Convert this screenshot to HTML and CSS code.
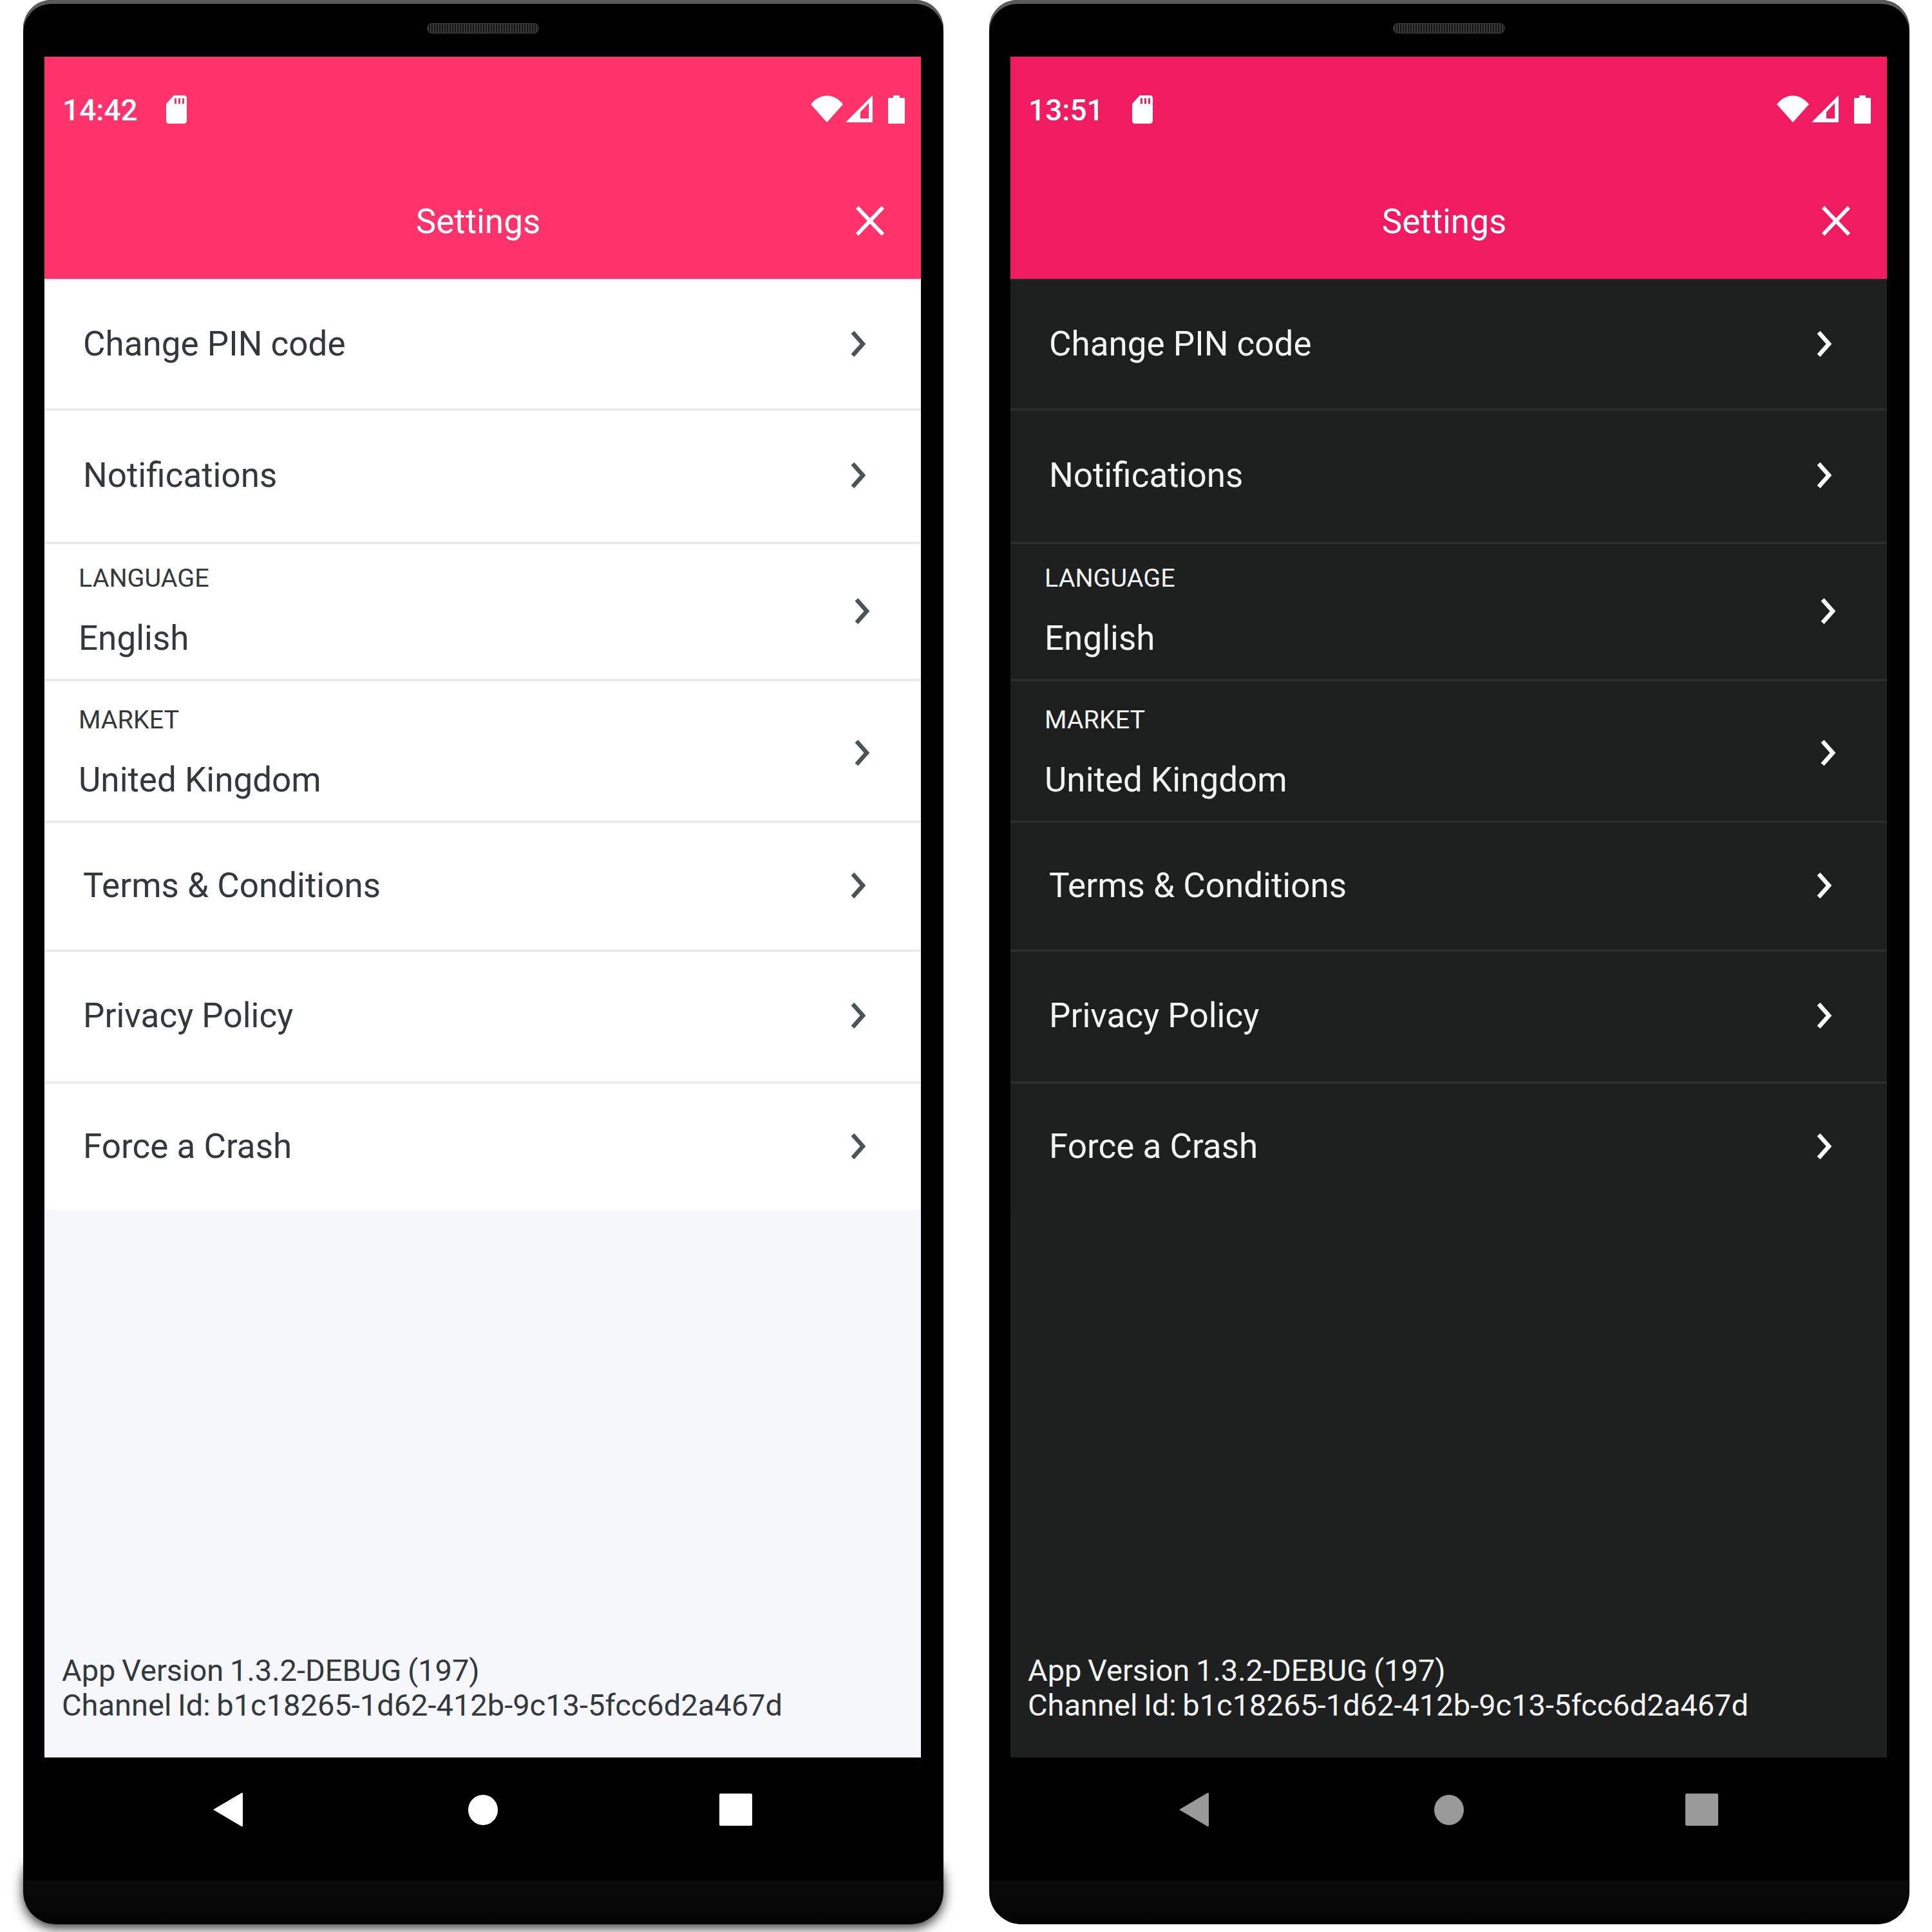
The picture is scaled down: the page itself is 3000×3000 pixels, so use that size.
FILE: index.html
```html
<!DOCTYPE html>
<html lang="en">
<head>
<meta charset="utf-8">
<title>Settings</title>
<link rel="stylesheet" href="styles.css">
</head>
<body>
<main class="stage">
  <section class="phone light">
    <div class="speaker"></div>
    <div class="screen">
      <header class="header">
        <div class="status">
          <span class="time">14:42</span>
          <svg class="sim" viewBox="4 2 16 20" preserveAspectRatio="none"><path d="M18 2h-8L4.02 8 4 20c0 1.1.9 2 2 2h12c1.1 0 2-.9 2-2V4c0-1.1-.9-2-2-2zm-6 6h-1.500V4H12v4zm3 0h-1.500V4H15v4zm3 0h-1.500V4H18v4z"/></svg>
          <svg class="wifi" viewBox="0 0 50 42"><path d="M0 14C14-4 36-4 50 14L25 42Z"/></svg>
          <svg class="signal" viewBox="0 0 42 42"><path fill-rule="evenodd" d="M0 42 42 0V42ZM23 36H36V12L23 26Z"/></svg>
          <svg class="battery" viewBox="0 0 26 44"><path d="M8 0H18V4H25Q26 4 26 5V43Q26 44 25 44H1Q0 44 0 43V5Q0 4 1 4H8Z"/></svg>
        </div>
        <div class="titlebar">
          <h1 class="title">Settings</h1>
          <svg class="close" viewBox="0 0 46 48"><path d="M3 3 43 45M43 3 3 45"/></svg>
        </div>
      </header>
      <ul class="list">
        <li class="row r1"><span class="name">Change PIN code</span><svg class="chev" viewBox="0 0 24 40"><path d="M3 2 19 20 3 38"/></svg></li>
        <li class="row r2"><span class="name">Notifications</span><svg class="chev" viewBox="0 0 24 40"><path d="M3 2 19 20 3 38"/></svg></li>
        <li class="row labeled r3"><div class="pair"><span class="label">LANGUAGE</span><span class="value">English</span></div><svg class="chev" viewBox="0 0 24 40"><path d="M3 2 19 20 3 38"/></svg></li>
        <li class="row labeled r4"><div class="pair"><span class="label">MARKET</span><span class="value">United Kingdom</span></div><svg class="chev" viewBox="0 0 24 40"><path d="M3 2 19 20 3 38"/></svg></li>
        <li class="row r5"><span class="name">Terms &amp; Conditions</span><svg class="chev" viewBox="0 0 24 40"><path d="M3 2 19 20 3 38"/></svg></li>
        <li class="row r6"><span class="name">Privacy Policy</span><svg class="chev" viewBox="0 0 24 40"><path d="M3 2 19 20 3 38"/></svg></li>
        <li class="row r7"><span class="name">Force a Crash</span><svg class="chev" viewBox="0 0 24 40"><path d="M3 2 19 20 3 38"/></svg></li>
      </ul>
      <footer class="footer">
        <p>App Version 1.3.2-DEBUG (197)</p>
        <p>Channel Id: b1c18265-1d62-412b-9c13-5fcc6d2a467d</p>
      </footer>
    </div>
    <nav class="nav">
      <svg class="back" viewBox="0 0 47 54"><path d="M1 27 45 1Q47 0 47 3V51Q47 54 45 53Z"/></svg>
      <span class="home"></span>
      <span class="recent"></span>
    </nav>
  </section>
  <section class="phone dark">
    <div class="speaker"></div>
    <div class="screen">
      <header class="header">
        <div class="status">
          <span class="time">13:51</span>
          <svg class="sim" viewBox="4 2 16 20" preserveAspectRatio="none"><path d="M18 2h-8L4.02 8 4 20c0 1.1.9 2 2 2h12c1.1 0 2-.9 2-2V4c0-1.1-.9-2-2-2zm-6 6h-1.500V4H12v4zm3 0h-1.500V4H15v4zm3 0h-1.500V4H18v4z"/></svg>
          <svg class="wifi" viewBox="0 0 50 42"><path d="M0 14C14-4 36-4 50 14L25 42Z"/></svg>
          <svg class="signal" viewBox="0 0 42 42"><path fill-rule="evenodd" d="M0 42 42 0V42ZM23 36H36V12L23 26Z"/></svg>
          <svg class="battery" viewBox="0 0 26 44"><path d="M8 0H18V4H25Q26 4 26 5V43Q26 44 25 44H1Q0 44 0 43V5Q0 4 1 4H8Z"/></svg>
        </div>
        <div class="titlebar">
          <h1 class="title">Settings</h1>
          <svg class="close" viewBox="0 0 46 48"><path d="M3 3 43 45M43 3 3 45"/></svg>
        </div>
      </header>
      <ul class="list">
        <li class="row r1"><span class="name">Change PIN code</span><svg class="chev" viewBox="0 0 24 40"><path d="M3 2 19 20 3 38"/></svg></li>
        <li class="row r2"><span class="name">Notifications</span><svg class="chev" viewBox="0 0 24 40"><path d="M3 2 19 20 3 38"/></svg></li>
        <li class="row labeled r3"><div class="pair"><span class="label">LANGUAGE</span><span class="value">English</span></div><svg class="chev" viewBox="0 0 24 40"><path d="M3 2 19 20 3 38"/></svg></li>
        <li class="row labeled r4"><div class="pair"><span class="label">MARKET</span><span class="value">United Kingdom</span></div><svg class="chev" viewBox="0 0 24 40"><path d="M3 2 19 20 3 38"/></svg></li>
        <li class="row r5"><span class="name">Terms &amp; Conditions</span><svg class="chev" viewBox="0 0 24 40"><path d="M3 2 19 20 3 38"/></svg></li>
        <li class="row r6"><span class="name">Privacy Policy</span><svg class="chev" viewBox="0 0 24 40"><path d="M3 2 19 20 3 38"/></svg></li>
        <li class="row r7"><span class="name">Force a Crash</span><svg class="chev" viewBox="0 0 24 40"><path d="M3 2 19 20 3 38"/></svg></li>
      </ul>
      <footer class="footer">
        <p>App Version 1.3.2-DEBUG (197)</p>
        <p>Channel Id: b1c18265-1d62-412b-9c13-5fcc6d2a467d</p>
      </footer>
    </div>
    <nav class="nav">
      <svg class="back" viewBox="0 0 47 54"><path d="M1 27 45 1Q47 0 47 3V51Q47 54 45 53Z"/></svg>
      <span class="home"></span>
      <span class="recent"></span>
    </nav>
  </section>
</main>
</body>
</html>
```

FILE: styles.css
```css
* { box-sizing: border-box; }

html, body {
  margin: 0;
  background: #fff;
}

body {
  width: 3000px;
  height: 3000px;
  overflow: hidden;
  font-family: Roboto, "Liberation Sans", sans-serif;
}

.stage {
  display: flex;
  gap: 71px;
  padding-left: 36px;
}

.phone {
  position: relative;
  width: 1429px;
  height: 2988px;
  padding: 36px 35px 0 33px;
  display: flex;
  flex-direction: column;
  border-radius: 44px 44px 50px 50px;
  background: linear-gradient(#000 2920px, #0a0a0a 2920px, #080808 2960px, #020202);
  box-shadow: inset 0 6px 0 #5a5a5a;
}

.phone::before {
  content: "";
  position: absolute;
  left: 0;
  right: 0;
  bottom: 0;
  height: 120px;
  border-radius: 50px;
  box-shadow: 0 6px 18px rgba(0, 0, 0, .8);
  clip-path: inset(0 -40px -20px -40px);
  z-index: -1;
}

.phone:first-child { z-index: 0; }

.speaker {
  align-self: center;
  width: 174px;
  height: 16px;
  margin: 0 0 36px;
  border: 1px solid #3e3e3e;
  border-radius: 8px;
  background: repeating-linear-gradient(90deg, #3a3a3a 0 2px, #161616 2px 4px);
}

.screen {
  height: 2641px;
  display: flex;
  flex-direction: column;
}

.light .screen { background: #f6f7fb; color: #32383b; }
.dark .screen { background: #1e2020; color: #f2f3f3; }

.header {
  height: 345px;
  color: #fff;
}

.light .header { background: #ff336b; }
.dark .header { background: #f01b60; }

.status {
  display: flex;
  align-items: flex-start;
  padding: 60px 25px 0 28px;
  height: 223px;
}

.status svg { fill: #fff; display: block; }

.time {
  width: 161px;
  font-size: 46px;
  line-height: 46px;
  font-weight: 500;
}

.sim { width: 32px; height: 44px; }
.wifi { width: 50px; height: 42px; margin-left: auto; }
.signal { width: 42px; height: 42px; margin-left: 4px; }
.battery { width: 26px; height: 44px; margin-left: 24px; }

.titlebar {
  display: flex;
  align-items: center;
  padding: 0 56px 0 88px;
}

.title {
  flex: 1;
  margin: 0;
  font-size: 53px;
  font-weight: 400;
  line-height: 66px;
  text-align: center;
}

.close {
  width: 46px;
  height: 48px;
  margin-top: -2px;
  fill: none;
  stroke: #fff;
  stroke-width: 6;
}

.list {
  margin: 0;
  padding: 0;
  list-style: none;
}

.row {
  display: flex;
  align-items: center;
  justify-content: space-between;
  padding: 0 85px 3px 60px;
  border-bottom: 4px solid;
}

.light .row { background: #fff; border-color: #e9ebee; }
.dark .row { background: #1d1f1f; border-color: #2a2c2d; }

.light .r1 { box-shadow: inset 0 2px 0 #eef4f2; }
.dark .r1 { box-shadow: inset 0 2px 0 #262828; }

.row:last-child { border-bottom: 0; }
.r1 { height: 205px; padding-bottom: 0; }
.r2 { height: 207px; }
.r3 { height: 213px; padding-bottom: 2px; }
.r4 { height: 220px; padding-top: 6px; padding-bottom: 0; }
.r5 { height: 200px; }
.r6 { height: 205px; }
.r7 { height: 196px; }

.row.labeled { padding-left: 53px; padding-right: 79px; }

.name, .value {
  font-size: 53px;
  line-height: 66px;
}

.pair {
  display: flex;
  flex-direction: column;
  gap: 36px;
}

.label {
  font-size: 39.500px;
  line-height: 48px;
}

.chev {
  width: 24px;
  height: 40px;
  fill: none;
  stroke-width: 6.500;
}

.light .chev { stroke: #4a5356; }
.dark .chev { stroke: #fff; }

.footer {
  margin-top: auto;
  padding: 0 0 54px 27px;
  font-size: 47px;
  line-height: 54px;
  word-spacing: -2px;
}

.footer p { margin: 0; }

.nav {
  display: flex;
  align-items: center;
  padding: 54px 0 0 261px;
}

.back { width: 47px; height: 54px; display: block; margin-right: 350px; }
.home { width: 46px; height: 47px; border-radius: 50%; margin-right: 344px; }
.recent { width: 51px; height: 50px; border-radius: 2px; }

.light .back { fill: #fff; }
.light .home, .light .recent { background: #fff; }
.dark .back { fill: #999; }
.dark .home, .dark .recent { background: #999; }
```
